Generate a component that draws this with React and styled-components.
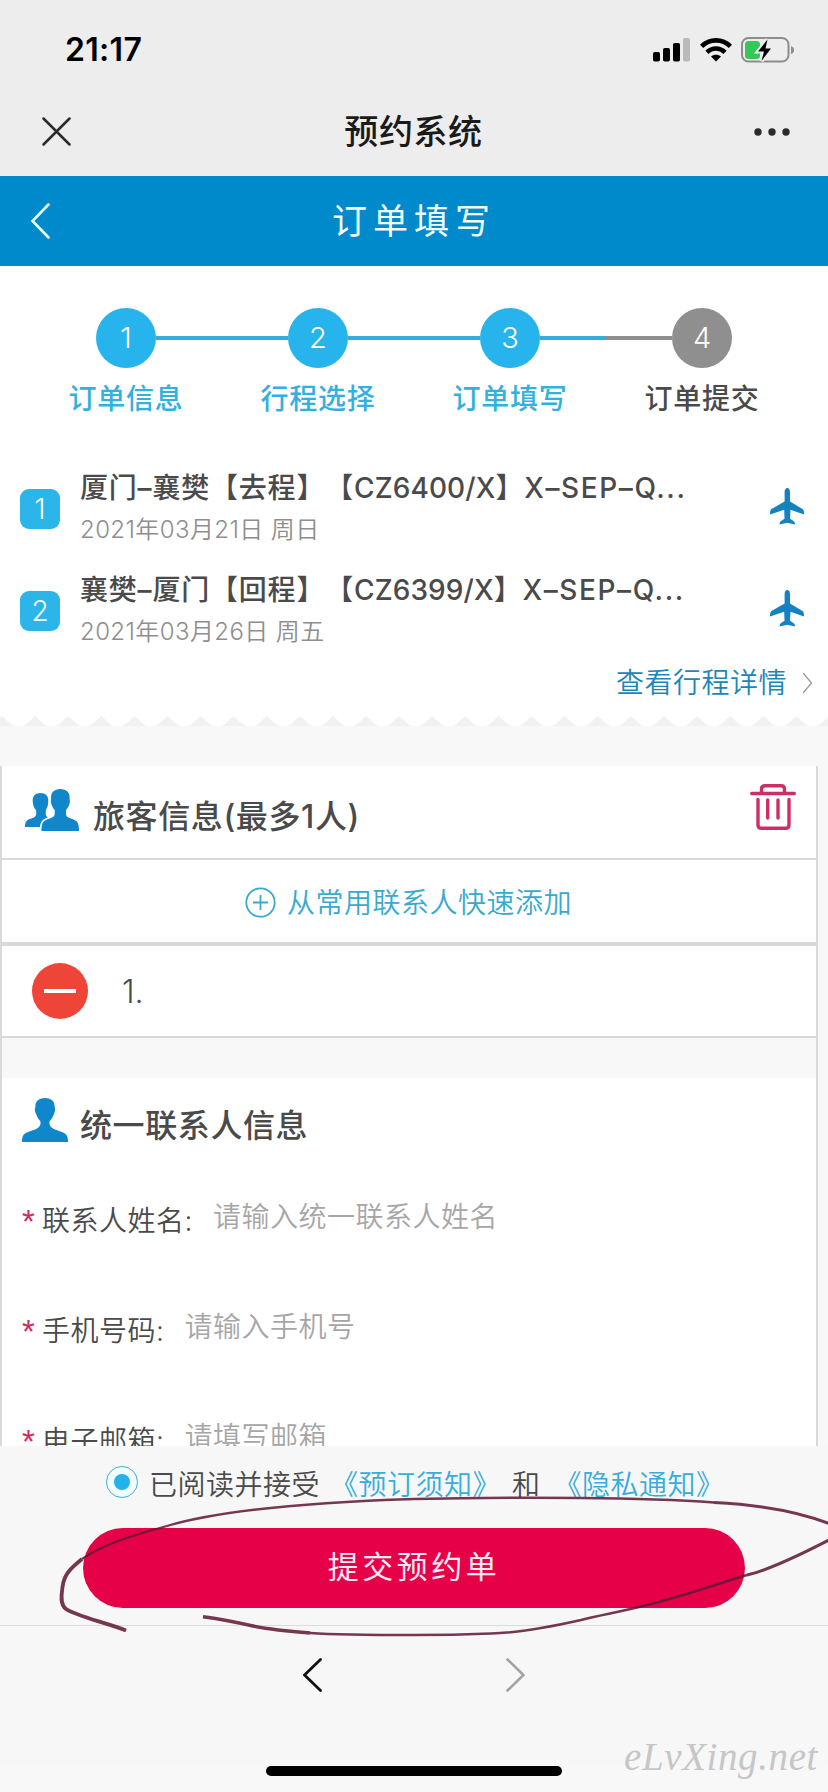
import React from 'react';
import styled, { createGlobalStyle } from 'styled-components';

const GlobalStyle = createGlobalStyle`
  *, *::before, *::after { box-sizing: border-box; }
  body { margin: 0; background: #f8f8f8; }
  svg { display: block; flex: none; }
`;

const Screen = styled.main`
  position: relative;
  width: 828px;
  height: 1792px;
  overflow: hidden;
  background: #f8f8f8;
  color: #4a4a4a;
  font-family: Inter, 'Noto Sans CJK SC', sans-serif;
  text-spacing-trim: space-all;
  display: flex;
  flex-direction: column;
`;

const StatusBar = styled.header`
  height: 88px;
  flex: none;
  padding: 11px 33px 0 65px;
  background: #ededed;
  display: flex;
  align-items: center;
  justify-content: space-between;
`;

const Clock = styled.time`
  color: #000;
  font-size: 32px;
  font-weight: 600;
  line-height: 40px;
  letter-spacing: 0.3px;
`;

const StatusIcons = styled.div`
  display: flex;
  align-items: center;
`;

const WebviewBar = styled.div`
  height: 88px;
  flex: none;
  padding: 0 38px 0 42px;
  background: #ededed;
  display: grid;
  grid-template-columns: 100px 1fr 105px;
  align-items: center;
  justify-items: center;

  & > :first-child { justify-self: start; }
  & > :last-child { justify-self: end; }
`;

const WebviewTitle = styled.h1`
  margin: 0;
  color: #1a1a1a;
  font-size: 34px;
  font-weight: 500;
  line-height: 44px;
  letter-spacing: 0.6px;
`;

const PageBar = styled.div`
  height: 90px;
  flex: none;
  padding: 0 31px;
  background: #008acb;
  display: grid;
  grid-template-columns: 60px 1fr 60px;
  align-items: center;
  justify-items: center;

  & > :first-child { justify-self: start; }
`;

const PageTitle = styled.h2`
  margin: 0;
  color: #f2fdff;
  font-size: 35px;
  font-weight: 400;
  line-height: 44px;
  letter-spacing: 6px;
`;

const Trip = styled.section`
  height: 450px;
  flex: none;
  background: #fff;
`;

const Steps = styled.ol`
  list-style: none;
  margin: 0;
  padding: 42px 30px 0;
  height: 198px;
  display: grid;
  grid-template-columns: repeat(4, 192px);
`;

const stepColor = (p) => (p.$done ? '#27b4ec' : '#8f8f8f');

const Step = styled.li`
  display: flex;
  flex-direction: column;
  align-items: center;
`;

const StepTrack = styled.div`
  width: 100%;
  display: grid;
  grid-template-columns: 1fr 60px 1fr;
  align-items: center;
`;

const StepLine = styled.i`
  height: 4px;
  background: ${(p) => (p.$hidden ? 'transparent' : p.$done ? '#33addb' : '#8f8f8f')};
`;

const StepDot = styled.span`
  height: 60px;
  border-radius: 50%;
  background: ${stepColor};
  color: #fff;
  font-size: 29px;
  font-weight: 350;
  line-height: 60px;
  text-align: center;
`;

const StepLabel = styled.span`
  margin-top: 11px;
  color: ${(p) => (p.$done ? '#34b0de' : '#4a4a4a')};
  font-size: 28px;
  font-weight: 500;
  line-height: 40px;
  letter-spacing: 0.7px;
`;

const Legs = styled.ul`
  list-style: none;
  margin: 0;
  padding: 0;
`;

const Leg = styled.li`
  height: 102px;
  padding: 4px 24px 0 20px;
  display: grid;
  grid-template-columns: 40px 1fr 34px;
  column-gap: 20px;
  align-items: start;
`;

const LegBadge = styled.span`
  margin-top: 21px;
  height: 40px;
  border-radius: 9px;
  background: #2bb5e8;
  color: #fff;
  font-size: 28px;
  font-weight: 350;
  line-height: 40px;
  text-align: center;
`;

const LegTitle = styled.div`
  height: 40px;
  font-size: 28px;
  font-weight: 500;
  line-height: 40px;
  letter-spacing: 0.8px;
  white-space: nowrap;
`;

const LegCode = styled.span`
  letter-spacing: ${(p) => p.$spacing}px;
`;

const LegDate = styled.div`
  height: 40px;
  margin-top: 2px;
  color: #8e8e8e;
  font-size: 24px;
  font-weight: 350;
  line-height: 40px;
  letter-spacing: 0.4px;
`;

const LegPlane = styled.span`
  margin-top: 20px;
`;

const DetailLink = styled.a`
  height: 40px;
  margin-top: -5px;
  padding-right: 15px;
  color: #1c86b8;
  font-size: 28px;
  font-weight: 350;
  line-height: 40px;
  letter-spacing: 0.5px;
  display: flex;
  justify-content: flex-end;
  align-items: center;
  gap: 15px;
`;

const TornEdge = styled.div`
  height: 50px;
  flex: none;
`;

const Card = styled.section`
  width: 818px;
  height: 680px;
  flex: none;
  overflow: hidden;
  border: solid #d9d9db;
  border-width: 0 2px;
`;

const CardHeader = styled.div`
  height: ${(p) => p.$height}px;
  padding: ${(p) => p.$padding};
  background: #fff;
  display: flex;
  align-items: flex-start;
`;

const CardTitle = styled.h3`
  margin: ${(p) => p.$margin};
  flex: 1;
  font-size: 32px;
  font-weight: 500;
  line-height: 44px;
  letter-spacing: 0.6px;
`;

const QuickAdd = styled.button`
  width: 100%;
  height: 88px;
  padding: 3px 0 0 243px;
  border: solid #d9d9db;
  border-width: 2px 0 4px;
  background: #fff;
  color: #38a9cf;
  font: 350 28px/40px Inter, 'Noto Sans CJK SC', sans-serif;
  letter-spacing: 0.5px;
  display: flex;
  align-items: center;
  gap: 11px;
`;

const PassengerRow = styled.div`
  height: 92px;
  padding-left: 30px;
  border-bottom: 2px solid #d9d9db;
  background: #fff;
  font-size: 32px;
  font-weight: 350;
  display: flex;
  align-items: center;
  gap: 34px;
`;

const RemoveButton = styled.span`
  width: 56px;
  height: 56px;
  border-radius: 50%;
  background: #ef4538;
  display: grid;
  place-items: center;

  &::after {
    content: '';
    width: 32px;
    height: 4px;
    background: #fff;
  }
`;

const Gap = styled.div`
  height: 40px;
`;

const Fields = styled.div`
  background: #fff;
  padding: 17px 0 0 20px;
`;

const Field = styled.label`
  height: 110px;
  display: flex;
  align-items: flex-start;
  font-size: 28px;
  font-weight: 350;
  line-height: 40px;
  letter-spacing: 0.5px;
`;

const Required = styled.span`
  width: 20px;
  padding-top: 5px;
  color: #d12a68;
  font-family: 'Liberation Sans', sans-serif;
  font-size: 33px;
`;

const FieldLabel = styled.span`
  margin: 4px 20px 0 0;
`;

const FieldHint = styled.span`
  color: #a6a6a6;
`;

const Footer = styled.footer`
  height: 180px;
  flex: none;
  border-bottom: 1px solid #dcdcdc;
  background: #f7f7f7;
`;

const Agreement = styled.div`
  height: 82px;
  padding: 0 0 9px 106px;
  font-size: 28px;
  font-weight: 350;
  letter-spacing: 0.5px;
  display: flex;
  align-items: center;
  gap: 10px;
`;

const Radio = styled.span`
  width: 32px;
  height: 32px;
  margin: 0 1px 1px 0;
  border: 1.5px solid #3eaed6;
  border-radius: 50%;
  background: #f2fdff;
  display: grid;
  place-items: center;

  &::after {
    content: '';
    width: 16px;
    height: 16px;
    border-radius: 50%;
    background: #25b1ea;
  }
`;

const Conjunction = styled.span`
  margin: 0 3px 0 1px;
`;

const NoticeLink = styled.a`
  color: #36addb;
`;

const SubmitButton = styled.button`
  display: block;
  width: 662px;
  height: 80px;
  margin-left: 83px;
  padding: 0 0 2px;
  border: 0;
  border-radius: 40px;
  background: #e50048;
  color: #ffe9f2;
  font: 400 31px/44px Inter, 'Noto Sans CJK SC', sans-serif;
  letter-spacing: 3.5px;
`;

const BrowserNav = styled.nav`
  height: 140px;
  flex: none;
  background: #f7f7f7;
  padding: 32px 0 0 303px;
  display: flex;
  gap: 184px;
`;

const HomeIndicator = styled.div`
  flex: none;
  width: 296px;
  height: 10px;
  margin-left: 266px;
  border-radius: 5px;
  background: #000;
`;

const Watermark = styled.span`
  position: absolute;
  right: 10px;
  bottom: 10px;
  color: #c6c6c8;
  font: italic 400 39px/50px 'Liberation Serif', serif;
  letter-spacing: 0.6px;
`;

const Markup = styled.svg`
  position: absolute;
  left: 0;
  top: 1480px;
  pointer-events: none;
`;

const IconSlot = styled.span`
  margin: ${(p) => p.$margin};
`;

const Signal = () => (
  <svg width="38" height="24" viewBox="0 0 38 24">
    <rect x="0" y="14" width="7" height="9.5" rx="1.8" />
    <rect x="10" y="10" width="7" height="13.5" rx="1.8" />
    <rect x="20" y="5" width="7" height="18.5" rx="1.8" />
    <rect x="30" y="0" width="7" height="23.5" rx="1.8" fill="#bababa" />
  </svg>
);

const Wifi = () => (
  <svg width="32" height="24" viewBox="0 0 32 24">
    <g fill="none" stroke="#000" strokeWidth="4.6">
      <path d="M1.6 8.4C9.5.3 22.5.3 30.4 8.4" />
      <path d="M7 14.3C12 9.200 20 9.200 25 14.3" />
    </g>
    <path d="M16 23.6 11 18.6C13.5 16 18.5 16 21 18.6Z" />
  </svg>
);

const Battery = () => (
  <svg width="54" height="26" viewBox="0 0 54 26">
    <rect x="1" y="1" width="46.5" height="23.5" rx="6.5" fill="none" stroke="#8c8c8c" strokeWidth="2" />
    <path d="M50 9Q53 10 53 13T50 17Z" fill="#8c8c8c" />
    <rect x="4" y="4" width="15" height="18" rx="3.5" fill="#35c759" />
    <path d="M26.5 2.5 17 14.5H23L20.5 24 30 11.5H24.5Z" stroke="#ededed" strokeWidth="4" />
    <path d="M26.5 2.5 17 14.5H23L20.5 24 30 11.5H24.5Z" />
  </svg>
);

const Close = () => (
  <svg width="30" height="30" viewBox="0 0 30 30" fill="none" stroke="#2b2b2b" strokeWidth="2.5" strokeLinecap="round">
    <path d="M1.5 1.5 27.5 27.5M27.5 1.5 1.5 27.5" />
  </svg>
);

const More = () => (
  <svg width="36" height="8" viewBox="0 0 36 8" fill="#2b2b2b">
    <circle cx="4" cy="4" r="3.7" />
    <circle cx="18" cy="4" r="3.7" />
    <circle cx="32" cy="4" r="3.7" />
  </svg>
);

const Chevron = ({ width, height, color, stroke, right }) => (
  <svg width={width} height={height} viewBox={`0 0 ${width} ${height}`} fill="none" stroke={color} strokeWidth={stroke} strokeLinecap="round">
    <path
      d={
        right
          ? `M1.5 1.5 ${width - 1.5} ${height / 2} 1.5 ${height - 1.5}`
          : `M${width - 1.5} 1.5 1.5 ${height / 2} ${width - 1.5} ${height - 1.5}`
      }
    />
  </svg>
);

const Plane = () => (
  <svg width="34" height="37" viewBox="0 0 34 37" fill="#1482c0">
    <path d="M17.3 0C19 0 20 1.8 20 4.2V13.5L32.5 21C33.8 22 34 23.5 34 26.5L20.5 21.8 20 30.8 23.5 33C24.5 33.8 25 35 25 36.6L17.3 34.8 9.5 36.6C9.5 35 10 33.8 11 33L14.5 30.8 14.2 21.8 0 26.5C0 23.5.3 22 1.5 21L14.6 13.5V4.2C14.6 1.8 15.6 0 17.3 0Z" />
  </svg>
);

const People = () => (
  <svg width="54" height="47" viewBox="0 -5 54 47" fill="#1087ca">
    <path d="M15.5 4C20.5 4 23.5 7 23.3 11.5 23.2 17 22 19 20.8 21.5V25.5C20.8 27.5 23 28.5 24.5 29.5 19.5 31 16.5 33.5 15.8 38H0C0 33 1.5 31 5.5 29.8 8.5 28.8 11 28 11.2 25V21.5C9.2 19 8 17 7.7 11.5 7.5 7 10.5 4 15.5 4Z" />
    <path
      stroke="#fff"
      strokeWidth="3.5"
      paintOrder="stroke"
      d="M35.3 0C41.5 0 45 3.7 44.6 9 44.6 11 45.3 12 44.6 14.5 43.8 17.5 42.5 19.5 41 21V25C41.2 28 44 29 48 30.3 52.5 32 54 34 54 42H16.5C16.5 34 18 32 22.5 30.3 26.5 29 29.5 28 29.7 25V21C28.2 19.5 27 17.5 26.2 14.5 25.5 12 26.1 11 26.1 9 25.7 3.7 29.3 0 35.3 0Z"
    />
  </svg>
);

const Person = () => (
  <svg width="46" height="44" viewBox="0 0 46 44" fill="#1087ca">
    <path d="M23 0C29.5 0 33 3.5 32.6 9 33.8 11 33 14 31.7 16.5 30.8 19.5 29 21.5 27.5 23.5V26C28.5 30.5 33 31.5 38.5 33.5 44.5 35.7 46 37 46 44H0C0 37 1.5 35.7 7.5 33.5 13 31.5 17.5 30.5 18.5 26V23.5C17 21.5 15.2 19.5 14.3 16.5 13 14 12.2 11 13.4 9 13 3.5 16.5 0 23 0Z" />
  </svg>
);

const Trash = () => (
  <svg width="46" height="46" viewBox="0 0 46 46" fill="none" stroke="#ca2f66" strokeWidth="3.4" strokeLinecap="round" strokeLinejoin="round">
    <path d="M1.7 9.5H44.3M11.5 9V5Q11.5 1.7 15 1.7H31Q34.5 1.7 34.5 5V9M8 15.5V41Q8 44.3 11.5 44.3H35.5Q39 44.3 39 41V15.5M17.7 16V34M28 16V34" />
  </svg>
);

const PlusCircle = () => (
  <svg width="31" height="31" viewBox="0 0 31 31" fill="none" stroke="#38a9cf" strokeWidth="1.8">
    <circle cx="15.5" cy="15.5" r="14.2" />
    <path d="M8 15.5H23M15.5 8V23" />
  </svg>
);

const ScallopEdge = () => (
  <svg width="828" height="10" viewBox="0 0 828 10">
    <defs>
      <pattern id="scallop" x="2" width="33.1" height="10" patternUnits="userSpaceOnUse">
        <path d="M0 0H33.1L24 8.2Q21.5 10 19.5 10H13.6Q11.6 10 9.1 8.2Z" fill="#fff" />
      </pattern>
    </defs>
    <rect width="828" height="10" fill="#f1f1f1" />
    <rect width="828" height="10" fill="url(#scallop)" />
  </svg>
);

const steps = [
  { label: '订单信息', done: true },
  { label: '行程选择', done: true },
  { label: '订单填写', done: true },
  { label: '订单提交', done: false },
];

const legs = [
  { route: '厦门–襄樊【去程】', flight: 'CZ6400/X', cabin: 'X–SEP–Q...', date: '2021年03月21日 周日' },
  { route: '襄樊–厦门【回程】', flight: 'CZ6399/X', cabin: 'X–SEP–Q...', date: '2021年03月26日 周五' },
];

const fields = [
  { label: '联系人姓名:', hint: '请输入统一联系人姓名' },
  { label: '手机号码:', hint: '请输入手机号' },
  { label: '电子邮箱:', hint: '请填写邮箱' },
];

export default function App() {
  return (
    <Screen>
      <GlobalStyle />
      <StatusBar>
        <Clock>21:17</Clock>
        <StatusIcons>
          <Signal />
          <IconSlot $margin="0 9px">
            <Wifi />
          </IconSlot>
          <Battery />
        </StatusIcons>
      </StatusBar>
      <WebviewBar>
        <Close />
        <WebviewTitle>预约系统</WebviewTitle>
        <More />
      </WebviewBar>
      <PageBar>
        <Chevron width={19} height={36} color="#eaffff" stroke={2.6} />
        <PageTitle>订单填写</PageTitle>
      </PageBar>

      <Trip>
        <Steps>
          {steps.map((s, i) => (
            <Step key={s.label}>
              <StepTrack>
                <StepLine $hidden={i === 0} $done={s.done} />
                <StepDot $done={s.done}>{i + 1}</StepDot>
                <StepLine $hidden={i === steps.length - 1} $done={s.done} />
              </StepTrack>
              <StepLabel $done={s.done}>{s.label}</StepLabel>
            </Step>
          ))}
        </Steps>
        <Legs>
          {legs.map((leg, i) => (
            <Leg key={leg.flight}>
              <LegBadge>{i + 1}</LegBadge>
              <div>
                <LegTitle>
                  {leg.route}【<LegCode $spacing={0.1}>{leg.flight}</LegCode>】<LegCode $spacing={1.6}>{leg.cabin}</LegCode>
                </LegTitle>
                <LegDate>{leg.date}</LegDate>
              </div>
              <LegPlane>
                <Plane />
              </LegPlane>
            </Leg>
          ))}
        </Legs>
        <DetailLink>
          查看行程详情
          <Chevron width={11} height={22} color="#999" stroke={1.3} right />
        </DetailLink>
      </Trip>
      <TornEdge>
        <ScallopEdge />
      </TornEdge>

      <Card>
        <CardHeader $height={92} $padding="18px 20px 0 23px">
          <People />
          <CardTitle $margin="11px 0 0 14px">旅客信息(最多1人)</CardTitle>
          <Trash />
        </CardHeader>
        <QuickAdd>
          <PlusCircle />
          从常用联系人快速添加
        </QuickAdd>
        <PassengerRow>
          <RemoveButton />
          1.
        </PassengerRow>
        <Gap />
        <CardHeader $height={102} $padding="20px 0 0 20px">
          <Person />
          <CardTitle $margin="6px 0 0 12px">统一联系人信息</CardTitle>
        </CardHeader>
        <Fields>
          {fields.map((f) => (
            <Field key={f.label}>
              <Required>*</Required>
              <FieldLabel>{f.label}</FieldLabel>
              <FieldHint>{f.hint}</FieldHint>
            </Field>
          ))}
        </Fields>
      </Card>

      <Footer>
        <Agreement>
          <Radio />
          <span>已阅读并接受</span>
          <NoticeLink>《预订须知》</NoticeLink>
          <Conjunction>和</Conjunction>
          <NoticeLink>《隐私通知》</NoticeLink>
        </Agreement>
        <SubmitButton>提交预约单</SubmitButton>
      </Footer>
      <BrowserNav>
        <Chevron width={19} height={34} color="#111" stroke={2.8} />
        <Chevron width={19} height={34} color="#a3a3a3" stroke={2.6} right />
      </BrowserNav>
      <HomeIndicator />

      <Watermark>eLvXing.net</Watermark>
      <Markup width="828" height="170" viewBox="0 1480 828 170" fill="none" stroke="#5f1634" strokeOpacity="0.86">
        <path strokeWidth="3.8" d="M126 1630.4C104 1622 76 1616 66 1609 59 1604 62 1592 62.5 1587 64 1574 71 1568 82 1559" />
        <path strokeWidth="2.3" d="M82 1559C102 1545 130 1536 167 1526 210 1513 290 1503 414 1499 480 1497.5 530 1497.5 581 1498 640 1498.5 680 1500 714 1502.5" />
        <path strokeWidth="3" d="M714 1502.5C765 1505 800 1512 830 1524M830 1539.5C800 1555 765 1571 747 1575" />
        <path strokeWidth="2.5" d="M747 1575C720 1583 680 1597 647 1605 620 1612 600 1615 581 1620 550 1627 520 1633 491 1633.5 465 1634.5 440 1635 414 1635 375 1635 340 1635 310 1633" />
        <path strokeWidth="3.4" d="M310 1633C285 1631 268 1629 253 1626 235 1622 220 1619 203 1616.8" />
      </Markup>
    </Screen>
  );
}
